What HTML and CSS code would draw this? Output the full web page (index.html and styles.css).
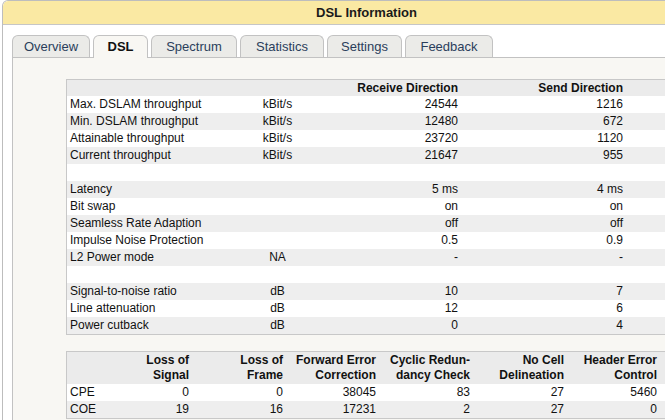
FILE: index.html
```html
<!DOCTYPE html>
<html>
<head>
<meta charset="utf-8">
<title>DSL Information</title>
<link rel="stylesheet" href="styles.css">
</head>
<body>
<div class="box">
  <div class="title">DSL Information</div>
  <div class="body">
    <div class="tabs">
      <div class="tab t1">Overview</div>
      <div class="tab t2 active">DSL</div>
      <div class="tab t3">Spectrum</div>
      <div class="tab t4">Statistics</div>
      <div class="tab t5">Settings</div>
      <div class="tab t6">Feedback</div>
    </div>
    <div class="panel">
      <table class="data main">
        <colgroup>
          <col class="c-label"><col class="c-unit"><col class="c-recv"><col class="c-send"><col class="c-rest">
        </colgroup>
        <thead>
          <tr><th></th><th></th><th class="num">Receive Direction</th><th class="num">Send Direction</th><th></th></tr>
        </thead>
        <tbody>
          <tr><td>Max. DSLAM throughput</td><td class="unit">kBit/s</td><td class="num">24544</td><td class="num">1216</td><td></td></tr>
          <tr><td>Min. DSLAM throughput</td><td class="unit">kBit/s</td><td class="num">12480</td><td class="num">672</td><td></td></tr>
          <tr><td>Attainable throughput</td><td class="unit">kBit/s</td><td class="num">23720</td><td class="num">1120</td><td></td></tr>
          <tr><td>Current throughput</td><td class="unit">kBit/s</td><td class="num">21647</td><td class="num">955</td><td></td></tr>
          <tr><td>&nbsp;</td><td></td><td></td><td></td><td></td></tr>
          <tr><td>Latency</td><td class="unit"></td><td class="num">5 ms</td><td class="num">4 ms</td><td></td></tr>
          <tr><td>Bit swap</td><td class="unit"></td><td class="num">on</td><td class="num">on</td><td></td></tr>
          <tr><td>Seamless Rate Adaption</td><td class="unit"></td><td class="num">off</td><td class="num">off</td><td></td></tr>
          <tr><td>Impulse Noise Protection</td><td class="unit"></td><td class="num">0.5</td><td class="num">0.9</td><td></td></tr>
          <tr><td>L2 Power mode</td><td class="unit">NA</td><td class="num">-</td><td class="num">-</td><td></td></tr>
          <tr><td>&nbsp;</td><td></td><td></td><td></td><td></td></tr>
          <tr><td>Signal-to-noise ratio</td><td class="unit">dB</td><td class="num">10</td><td class="num">7</td><td></td></tr>
          <tr><td>Line attenuation</td><td class="unit">dB</td><td class="num">12</td><td class="num">6</td><td></td></tr>
          <tr><td>Power cutback</td><td class="unit">dB</td><td class="num">0</td><td class="num">4</td><td></td></tr>
        </tbody>
      </table>

      <table class="data errors">
        <colgroup>
          <col class="e-label"><col class="e-a"><col class="e-a"><col class="e-b"><col class="e-a"><col class="e-a"><col class="e-b"><col class="e-rest">
        </colgroup>
        <thead>
          <tr>
            <th></th>
            <th class="num">Loss of<br>Signal</th>
            <th class="num">Loss of<br>Frame</th>
            <th class="num">Forward Error<br>Correction</th>
            <th class="num">Cyclic Redun-<br>dancy Check</th>
            <th class="num">No Cell<br>Delineation</th>
            <th class="num">Header Error<br>Control</th>
            <th></th>
          </tr>
        </thead>
        <tbody>
          <tr><td>CPE</td><td class="num">0</td><td class="num">0</td><td class="num">38045</td><td class="num">83</td><td class="num">27</td><td class="num">5460</td><td></td></tr>
          <tr><td>COE</td><td class="num">19</td><td class="num">16</td><td class="num">17231</td><td class="num">2</td><td class="num">27</td><td class="num">0</td><td></td></tr>
        </tbody>
      </table>
    </div>
  </div>
</div>
</body>
</html>
```

FILE: styles.css
```css
html, body {
  margin: 0;
  padding: 0;
  overflow: hidden;
  background: #ffffff;
}

body {
  font-family: "Liberation Sans", Arial, sans-serif;
  font-size: 12px;
  color: #111111;
}

.box {
  width: 727px;
  height: 419px;
  margin-left: 2px;
  border: 1px solid #bdbdbd;
  border-bottom: none;
  border-top-left-radius: 6px;
  background: #ffffff;
  overflow: hidden;
}

.title {
  height: 23px;
  line-height: 23px;
  background: #fae9a3;
  border-bottom: 1px solid #c6c6c6;
  border-top-left-radius: 5px;
  text-align: center;
  font-weight: bold;
  font-size: 13px;
  color: #1a1a1a;
}

.body {
  padding: 10px 0 0 9px;
}

.tabs {
  display: flex;
  align-items: flex-end;
  gap: 3px;
  border-bottom: 1px solid #c2c2c2;
}

.tab {
  box-sizing: border-box;
  height: 22px;
  line-height: 21px;
  border: 1px solid #c2c2c2;
  border-bottom: none;
  border-radius: 6px 6px 0 0;
  background: #ebebe8;
  text-align: center;
  font-size: 13px;
  color: #2a3e5b;
  white-space: nowrap;
}

.tab.active {
  height: 23px;
  margin-bottom: -1px;
  background: #f8f7f3;
  font-weight: bold;
  color: #111111;
}

.t1 { width: 78px; }
.t2 { width: 55px; }
.t3 { width: 86px; }
.t4 { width: 84px; }
.t5 { width: 75px; }
.t6 { width: 88px; }

.panel {
  height: 341px;
  background: #f8f7f3;
  border-left: 1px solid #c2c2c2;
  padding: 21px 0 0 53px;
}

.data {
  width: 614px;
  table-layout: fixed;
  border-collapse: separate;
  border-spacing: 0;
  border: 1px solid #c8c8c8;
  background: #ffffff;
}

.data td,
.data th {
  padding: 0 3px;
  white-space: nowrap;
  overflow: hidden;
  text-align: left;
  font-weight: normal;
}

.data td {
  line-height: 17px;
}

.data thead th {
  background: #ebebeb;
  font-weight: bold;
}

.data tbody tr:nth-child(even) td {
  background: #eeeeee;
}

.data .num {
  text-align: right;
}

.data .unit {
  text-align: center;
}

.main thead th {
  line-height: 16px;
}

.c-label { width: 177px; }
.c-unit { width: 67px; }
.c-recv { width: 150px; }
.c-send { width: 165px; }
.c-rest { width: 53px; }

.errors {
  margin-top: 16px;
}

.errors thead th {
  line-height: 15px;
  padding-top: 1px;
  padding-bottom: 1px;
}

.errors .num {
  padding-right: 4px;
}

.e-label { width: 32px; }
.e-a { width: 94px; }
.e-b { width: 93px; }
.e-rest { width: 18px; }
```
